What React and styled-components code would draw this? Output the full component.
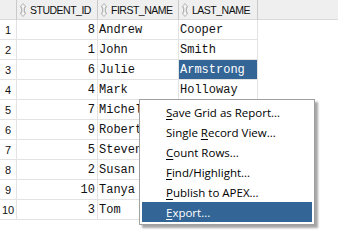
import React from "react";
import styled, { createGlobalStyle } from "styled-components";

const Global = createGlobalStyle`
  html, body { margin: 0; padding: 0; background: #fff; }
  body { width: 338px; height: 235px; overflow: hidden; }
`;

const rows = [
  [8, "Andrew", "Cooper"],
  [1, "John", "Smith"],
  [6, "Julie", "Armstrong"],
  [4, "Mark", "Holloway"],
  [7, "Michelle", "Lopez"],
  [9, "Robert", "Miller"],
  [5, "Steven", "Jones"],
  [2, "Susan", "Brown"],
  [10, "Tanya", "Wilson"],
  [3, "Tom", "Taylor"],
];

const menuItems = [
  ["", "S", "ave Grid as Report..."],
  ["Single ", "R", "ecord View..."],
  ["", "C", "ount Rows..."],
  ["", "F", "ind/Highlight..."],
  ["", "P", "ublish to APEX..."],
  ["", "E", "xport..."],
];

const Page = styled.div`
  position: relative;
  width: 338px;
  height: 235px;
  overflow: hidden;
  background: #fff;
`;

const Grid = styled.div`
  display: grid;
  grid-template-columns: 16px 81px 81px 79px 1fr;
  grid-auto-rows: 20px;
`;

const HeadCell = styled.div`
  display: flex;
  align-items: center;
  gap: 3px;
  padding-left: ${(p) => (p.$blank ? 0 : 2)}px;
  background: #efefef;
  border-bottom: 1px solid #d9d9d9;
  border-left: ${(p) => (p.$col ? "1px solid #c9c9c9" : "none")};
  font-family: "Liberation Sans", Arial, sans-serif;
  font-size: 10.5px;
  letter-spacing: -0.5px;
  color: #111;
  white-space: nowrap;
  overflow: hidden;
`;

const NumCell = styled.div`
  display: flex;
  align-items: center;
  justify-content: center;
  border-bottom: 1px solid #e3e3e3;
  font-family: "Liberation Sans", Arial, sans-serif;
  font-size: 11px;
  color: #111;
`;

const Cell = styled.div`
  display: flex;
  align-items: center;
  justify-content: ${(p) => (p.$right ? "flex-end" : "flex-start")};
  padding: 0 2px 0 1px;
  border-left: 1px solid #e3e3e3;
  border-bottom: 1px solid #e3e3e3;
  background: ${(p) => (p.$sel ? "#336596" : "#fff")};
  color: ${(p) => (p.$sel ? "#fff" : "#111")};
  font-family: "Liberation Mono", "Courier New", monospace;
  font-size: 12px;
  white-space: nowrap;
  overflow: hidden;
`;

const Filler = styled.div`
  border-left: 1px solid #e3e3e3;
`;

const Menu = styled.div`
  position: absolute;
  left: 139px;
  top: 99px;
  width: 170px;
  padding: 2px;
  background: #fff;
  border: 1px solid #a0a0a0;
  box-shadow: 3px 3px 2px rgba(0, 0, 0, 0.35);
  display: flex;
  flex-direction: column;
`;

const Item = styled.div`
  height: 20px;
  display: flex;
  align-items: center;
  padding-left: 24px;
  font-family: "Open Sans", "Noto Sans", sans-serif;
  font-size: 11.5px;
  background: ${(p) => (p.$active ? "#336596" : "transparent")};
  color: ${(p) => (p.$active ? "#fff" : "#000")};
  white-space: pre;
  u { text-underline-offset: 2px; }
`;

function SortIcon() {
  return (
    <svg width="8" height="14" viewBox="0 0 8 14">
      <path
        d="M4 0.5 L7 4 L5.5 4 L5.5 10 L7 10 L4 13.5 L1 10 L2.5 10 L2.5 4 L1 4 Z"
        fill="#f4f4f4"
        stroke="#b5b5b5"
        strokeWidth="1"
      />
      <path d="M4 5 L4 9" stroke="#cfcfcf" strokeWidth="1" />
    </svg>
  );
}

export default function App() {
  return (
    <Page>
      <Global />
      <Grid>
        <HeadCell $blank />
        {["STUDENT_ID", "FIRST_NAME", "LAST_NAME"].map((h) => (
          <HeadCell key={h} $col>
            <SortIcon />
            <span>{h}</span>
          </HeadCell>
        ))}
        <HeadCell $col $blank />
        {rows.map(([id, first, last], i) => (
          <React.Fragment key={i}>
            <NumCell>{i + 1}</NumCell>
            <Cell $right>{id}</Cell>
            <Cell>{first}</Cell>
            <Cell $sel={i === 2}>{last}</Cell>
            <Filler />
          </React.Fragment>
        ))}
      </Grid>
      <Menu>
        {menuItems.map(([pre, key, rest], i) => (
          <Item key={i} $active={i === menuItems.length - 1}>
            <span>
              {pre}
              <u>{key}</u>
              {rest}
            </span>
          </Item>
        ))}
      </Menu>
    </Page>
  );
}
